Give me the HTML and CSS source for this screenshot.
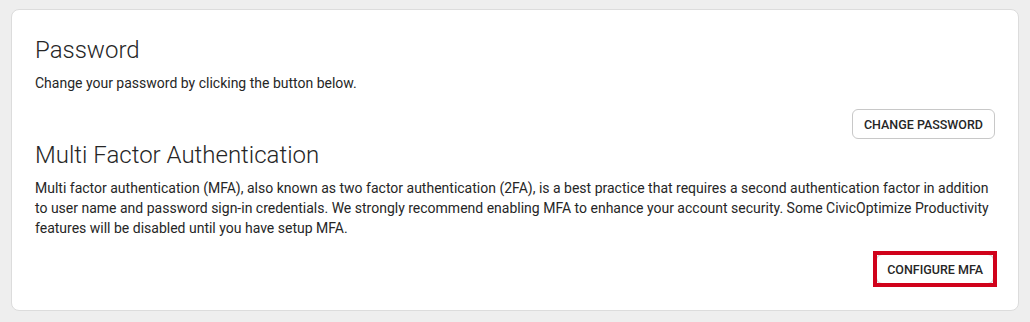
FILE: index.html
```html
<!DOCTYPE html>
<html lang="en">
<head>
    <meta charset="UTF-8">
    <meta name="viewport" content="width=device-width, initial-scale=1.0">
    <title>Account Security</title>
    <link rel="stylesheet" href="styles.css">
</head>
<body>
    <div class="security-card">
        <section class="security-section">
            <h2>Password</h2>
            <p>Change your password by clicking the button below.</p>
            <div class="actions">
                <button type="button" class="btn">Change Password</button>
            </div>
        </section>

        <section class="security-section">
            <h2>Multi Factor Authentication</h2>
            <p>Multi factor authentication (MFA), also known as two factor authentication (2FA), is a best practice that requires a second authentication factor in addition to user name and password sign-in credentials. We strongly recommend enabling MFA to enhance your account security. Some CivicOptimize Productivity features will be disabled until you have setup MFA.</p>
            <div class="actions">
                <span class="highlight">
                    <button type="button" class="btn btn-narrow">Configure MFA</button>
                </span>
            </div>
        </section>
    </div>
</body>
</html>
```

FILE: styles.css
```css
:root {
    --page-bg: #eeeeee;
    --card-border: #dcdcdc;
    --text: #262626;
    --btn-border: #c8c8c8;
    --highlight: #d0021b;
}

* {
    margin: 0;
    padding: 0;
    box-sizing: border-box;
    font-family: Roboto, 'Liberation Sans', Arial, sans-serif;
}

body {
    background-color: var(--page-bg);
    color: var(--text);
    padding: 9px 11px 11px;
    height: 100vh;
}

.security-card {
    background-color: white;
    border: 1px solid var(--card-border);
    border-radius: 8px;
    padding: 24px 23px 23px;
    height: 100%;
}

.security-section h2 {
    font-size: 24px;
    font-weight: 300;
    line-height: 32px;
    margin-bottom: 7px;
}

.security-section p {
    font-size: 14px;
    line-height: 20px;
}

.actions {
    display: flex;
    justify-content: flex-end;
    margin-top: 16px;
}

.btn {
    background-color: white;
    color: var(--text);
    border: 1px solid var(--btn-border);
    border-radius: 6px;
    height: 30px;
    padding: 0 11px;
    font-size: 12.5px;
    font-weight: 500;
    text-transform: uppercase;
    cursor: pointer;
}

.btn-narrow {
    padding: 0 10px;
}

/* red callout around the MFA button */
.highlight {
    display: inline-flex;
    margin-right: 1px;
    outline: 4px solid var(--highlight);
    outline-offset: -1px;
}
```
